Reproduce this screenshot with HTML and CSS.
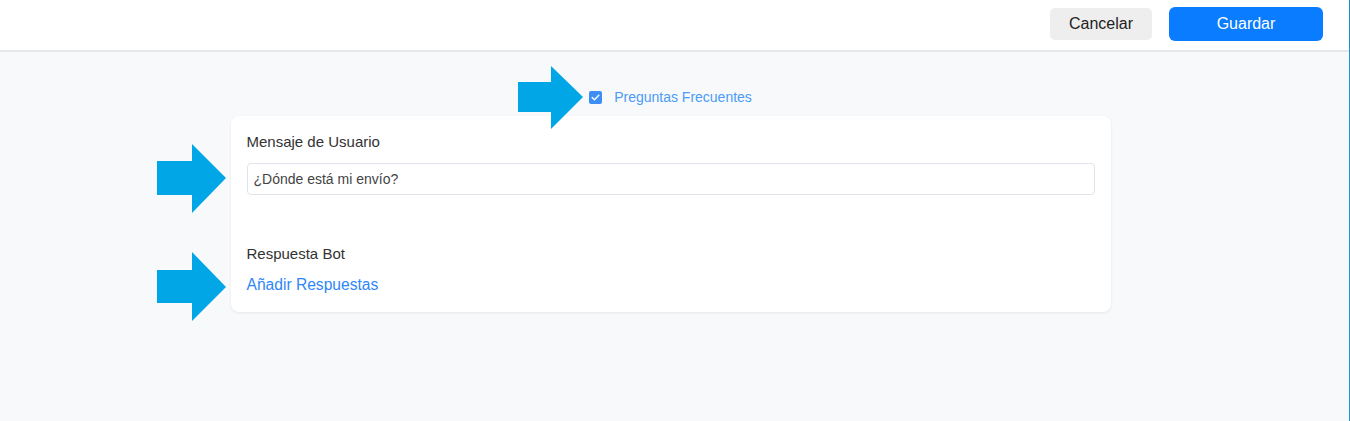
FILE: index.html
```html
<!DOCTYPE html>
<html lang="es">
<head>
  <meta charset="UTF-8">
  <meta name="viewport" content="width=device-width, initial-scale=1.0">
  <title>Preguntas Frecuentes</title>
  <link rel="stylesheet" href="styles.css">
</head>
<body>
  <div class="topbar">
    <button class="btn btn-cancel">Cancelar</button>
    <button class="btn btn-save">Guardar</button>
  </div>

  <div class="main">
    <label class="faq-toggle">
      <span class="check">
        <svg width="9" height="9" viewBox="0 0 9 9"><path d="M1.2 4.6 L3.5 6.8 L7.8 2.2" fill="none" stroke="#fff" stroke-width="1.4" stroke-linecap="round" stroke-linejoin="round"/></svg>
      </span>
      Preguntas Frecuentes
    </label>

    <div class="card">
      <div class="field-label">Mensaje de Usuario</div>
      <input type="text" class="text-input" value="¿Dónde está mi envío?">

      <div class="field-label bot-label">Respuesta Bot</div>
      <a href="#" class="add-link">Añadir Respuestas</a>
    </div>
  </div>

  <!-- annotation arrows -->
  <svg class="arrow arrow-top" width="66" height="64" viewBox="0 0 66 64"><polygon points="0,16 33,16 33,0 65,31 33,63 33,46 0,46" fill="#00a6e6"/></svg>
  <svg class="arrow arrow-msg" width="70" height="70" viewBox="0 0 70 70"><polygon points="0,17 35,17 35,0 69,34 35,69 35,51 0,51" fill="#00a6e6"/></svg>
  <svg class="arrow arrow-bot" width="70" height="70" viewBox="0 0 70 70"><polygon points="0,18 35,18 35,0 69,35 35,69 35,51 0,51" fill="#00a6e6"/></svg>
</body>
</html>
```

FILE: styles.css
```css
:root {
  --bg: #f8f9fb;
  --primary: #0a7cff;
  --link: #2f86f6;
  --text: #333333;
  --border: #dfe3ea;
}

* {
  box-sizing: border-box;
}

html, body {
  margin: 0;
  padding: 0;
}

body {
  font-family: 'Liberation Sans', Arial, sans-serif;
  background: var(--bg);
  width: 1350px;
  height: 421px;
  border-right: 1px solid #1f8fd6;
  position: relative;
  overflow: hidden;
}

.topbar {
  height: 52px;
  background: #fff;
  border-bottom: 2px solid #e6e7e9;
  display: flex;
  justify-content: flex-end;
  align-items: center;
  gap: 17px;
  padding-right: 26px;
}

.btn {
  font-family: inherit;
  font-size: 16px;
  border: none;
  cursor: pointer;
}

.btn-cancel {
  width: 102px;
  height: 32px;
  margin-top: -2px;
  background: #eeeeee;
  color: #222;
  border-radius: 5px;
}

.btn-save {
  width: 154px;
  height: 34px;
  margin-top: -2px;
  background: var(--primary);
  color: #fff;
  border-radius: 6px;
}

.main {
  display: flex;
  flex-direction: column;
  align-items: center;
  padding-top: 36px;
  padding-right: 8px;
}

.faq-toggle {
  display: flex;
  align-items: center;
  gap: 12px;
  height: 18px;
  font-size: 14px;
  color: #4a9cf6;
  margin-bottom: 10px;
}

.check {
  width: 13px;
  height: 13px;
  border-radius: 2px;
  background: #3d8ff5;
  display: flex;
  align-items: center;
  justify-content: center;
}

.card {
  width: 880px;
  background: #fff;
  border-radius: 8px;
  box-shadow: 0 1px 3px rgba(0, 0, 0, 0.08);
  padding: 16px 16px 16px;
  display: flex;
  flex-direction: column;
  align-items: flex-start;
}

.field-label {
  font-size: 15px;
  line-height: 20px;
  color: var(--text);
}

.text-input {
  width: 100%;
  height: 32px;
  margin-top: 11px;
  padding: 0 6px;
  font-family: inherit;
  font-size: 14px;
  color: #444;
  border: 1px solid var(--border);
  border-radius: 4px;
  outline: none;
}

.bot-label {
  margin-top: 49px;
}

.add-link {
  margin-top: 10px;
  font-size: 15.6px;
  line-height: 22px;
  color: var(--link);
  text-decoration: none;
}

.arrow {
  position: absolute;
}

.arrow-top {
  left: 518px;
  top: 66px;
}

.arrow-msg {
  left: 157px;
  top: 144px;
}

.arrow-bot {
  left: 157px;
  top: 252px;
}
```
